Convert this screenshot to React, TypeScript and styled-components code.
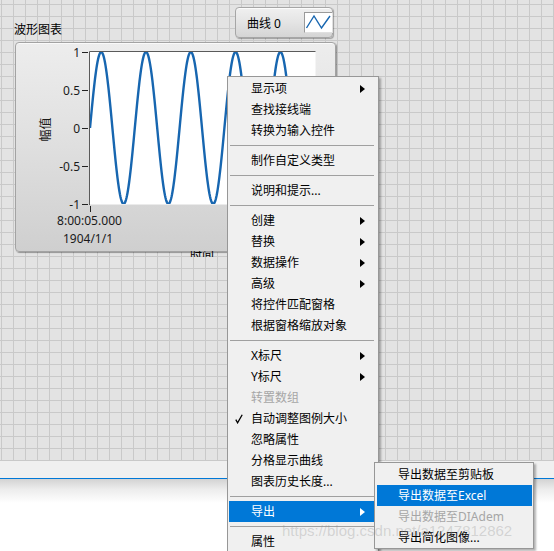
import React from "react";
import styled, { createGlobalStyle } from "styled-components";

const GlobalStyle = createGlobalStyle`
  html, body {
    margin: 0;
    padding: 0;
  }
  body {
    width: 554px;
    height: 551px;
    overflow: hidden;
    background: #ffffff;
    font-family: "Noto Sans", "Noto Sans CJK SC", sans-serif;
    font-size: 12px;
    color: #000;
  }
`;

const Screen = styled.div`
  position: relative;
  width: 554px;
  height: 551px;
  overflow: hidden;
  display: flex;
  flex-direction: column;
`;

/* LabVIEW front panel grid */
const Panel = styled.div`
  position: relative;
  flex: none;
  height: 461px;
  background-color: #e3e3e3;
  background-image: linear-gradient(to right, #c9c9c9 1px, transparent 1px),
    linear-gradient(to bottom, #c9c9c9 1px, transparent 1px);
  background-size: 12px 12px;
  background-position: 1px 4px;
`;

const StatusBar = styled.div`
  flex: none;
  height: 17px;
  background: #f0f0f0;
  border-bottom: 1px solid #0078d7;
`;

const BelowArea = styled.div`
  flex: 1;
  background: linear-gradient(to bottom, #d3d3d3 0px, #ececec 10px, #ffffff 24px);
`;

/* a control dropped on the panel: label above, frame below */
const ChartControl = styled.div`
  position: absolute;
  left: 14px;
  top: 22px;
  display: flex;
  flex-direction: column;
  align-items: flex-start;
`;

const ChartLabel = styled.div`
  line-height: 15px;
  font-size: 12px;
  margin-bottom: 5px;
`;

const ChartFrame = styled.div`
  margin-left: 1px;
  width: 321px;
  height: 210px;
  box-sizing: border-box;
  border: 1px solid #a3a3a3;
  border-radius: 4px;
  background: linear-gradient(to bottom, #ededed 0%, #e2e2e2 40%, #cfcfcf 100%);
  box-shadow: inset 0 1px 0 #fafafa, 1px 1px 1px rgba(0, 0, 0, 0.35);
  overflow: hidden;

  svg {
    display: block;
  }
`;

const AxisName = styled.div`
  margin-left: 176px;
  margin-top: -1px;
  height: 6px;
  overflow: hidden;
  font-size: 12px;
  line-height: 12px;

  span {
    display: block;
    margin-top: -1px;
  }
`;

const Legend = styled.div`
  position: absolute;
  left: 235px;
  top: 7px;
  width: 98px;
  height: 31px;
  box-sizing: border-box;
  display: flex;
  align-items: center;
  padding-left: 11px;
  gap: 23px;
  white-space: nowrap;
  border: 1px solid #a6a6a6;
  border-radius: 4px;
  background: linear-gradient(to bottom, #f0f0f0 0%, #e4e4e4 50%, #d5d5d5 100%);
  box-shadow: inset 0 1px 0 #fbfbfb, 1px 1px 1px rgba(0, 0, 0, 0.3);
  font-size: 12px;
`;

const Swatch = styled.div`
  flex: none;
  width: 29px;
  height: 21px;
  box-sizing: border-box;
  background: #ffffff;
  border: 1px solid #9a9a9a;
  border-right-color: #e0e0e0;
  border-bottom-color: #e0e0e0;

  svg {
    display: block;
  }
`;

const Menu = styled.div<{ $left: number; $top: number; $width: number }>`
  position: absolute;
  left: ${(p) => p.$left}px;
  top: ${(p) => p.$top}px;
  width: ${(p) => p.$width}px;
  box-sizing: border-box;
  background: #f0f0f0;
  border: 1px solid #979797;
  box-shadow: 2px 2px 2px rgba(0, 0, 0, 0.3);
  display: flex;
  flex-direction: column;
`;

const MainMenu = styled(Menu)`
  padding: 1px 3px 40px 1px;
`;

const SubMenu = styled(Menu)`
  padding: 1px 1px 0 2px;
`;

const Row = styled.div<{ $active?: boolean; $disabled?: boolean; $indent: number }>`
  position: relative;
  height: 21px;
  display: flex;
  align-items: center;
  padding-left: ${(p) => p.$indent}px;
  white-space: nowrap;
  font-size: 12px;
  line-height: 21px;
  color: ${(p) => (p.$active ? "#ffffff" : p.$disabled ? "#a6a6a6" : "#000000")};
  background: ${(p) => (p.$active ? "#0078d7" : "transparent")};
`;

const Arrow = styled.span<{ $active?: boolean }>`
  margin-left: auto;
  margin-right: 10px;
  width: 0;
  height: 0;
  border-top: 4px solid transparent;
  border-bottom: 4px solid transparent;
  border-left: 5px solid ${(p) => (p.$active ? "#ffffff" : "#000000")};
`;

const Check = styled.svg`
  position: absolute;
  left: 6px;
  top: 6px;
`;

const Separator = styled.div`
  height: 1px;
  margin: 4px 1px 4px 1px;
  background: #a0a0a0;
`;

const Watermark = styled.div`
  position: absolute;
  left: 282px;
  top: 523px;
  font-family: "Liberation Sans", Arial, sans-serif;
  font-size: 15px;
  line-height: 15px;
  color: rgba(140, 140, 140, 0.3);
  pointer-events: none;
  white-space: nowrap;
`;

type Entry =
  | { kind: "sep" }
  | {
      kind: "item";
      label: string;
      sub?: boolean;
      disabled?: boolean;
      checked?: boolean;
      active?: boolean;
    };

const mainEntries: Entry[] = [
  { kind: "item", label: "显示项", sub: true },
  { kind: "item", label: "查找接线端" },
  { kind: "item", label: "转换为输入控件" },
  { kind: "sep" },
  { kind: "item", label: "制作自定义类型" },
  { kind: "sep" },
  { kind: "item", label: "说明和提示..." },
  { kind: "sep" },
  { kind: "item", label: "创建", sub: true },
  { kind: "item", label: "替换", sub: true },
  { kind: "item", label: "数据操作", sub: true },
  { kind: "item", label: "高级", sub: true },
  { kind: "item", label: "将控件匹配窗格" },
  { kind: "item", label: "根据窗格缩放对象" },
  { kind: "sep" },
  { kind: "item", label: "X标尺", sub: true },
  { kind: "item", label: "Y标尺", sub: true },
  { kind: "item", label: "转置数组", disabled: true },
  { kind: "item", label: "自动调整图例大小", checked: true },
  { kind: "item", label: "忽略属性" },
  { kind: "item", label: "分格显示曲线" },
  { kind: "item", label: "图表历史长度..." },
  { kind: "sep" },
  { kind: "item", label: "导出", sub: true, active: true },
  { kind: "sep" },
  { kind: "item", label: "属性" },
];

const exportEntries: Entry[] = [
  { kind: "item", label: "导出数据至剪贴板" },
  { kind: "item", label: "导出数据至Excel", active: true },
  { kind: "item", label: "导出数据至DIAdem", disabled: true },
  { kind: "item", label: "导出简化图像..." },
];

const MenuEntries = ({ entries, indent }: { entries: Entry[]; indent: number }) => (
  <>
    {entries.map((e, i) =>
      e.kind === "sep" ? (
        <Separator key={i} />
      ) : (
        <Row key={i} $active={e.active} $disabled={e.disabled} $indent={indent}>
          {e.checked && (
            <Check width="8" height="10" viewBox="0 0 8 10">
              <path d="M0.8 5.6 L2.6 8.8 L7.2 0.8" fill="none" stroke="#000" strokeWidth="1.3" />
            </Check>
          )}
          {e.label}
          {e.sub && <Arrow $active={e.active} />}
        </Row>
      )
    )}
  </>
);

// sine curve in page coordinates
const plot = { left: 90, right: 315, top: 52, bottom: 204 };
const period = 44.8;
const wave = (() => {
  const pts: string[] = [];
  const mid = (plot.top + plot.bottom) / 2;
  const amp = (plot.bottom - plot.top) / 2;
  for (let x = plot.left; x <= plot.right; x += 0.5) {
    const y = mid - amp * Math.sin((2 * Math.PI * (x - plot.left)) / period);
    pts.push(`${x.toFixed(1)},${y.toFixed(2)}`);
  }
  return pts.join(" ");
})();

const yTicks = [
  { v: "1", y: 52 },
  { v: "0.5", y: 90 },
  { v: "0", y: 128 },
  { v: "-0.5", y: 166 },
  { v: "-1", y: 204 },
];

const WaveChart = () => (
  <svg width="319" height="208" viewBox="16 43 319 208">
    <defs>
      <clipPath id="plotClip">
        <rect x={plot.left} y={plot.top} width={plot.right - plot.left} height={plot.bottom - plot.top} />
      </clipPath>
    </defs>
    <rect
      x={plot.left - 0.5}
      y={plot.top - 0.5}
      width={plot.right - plot.left + 1}
      height={plot.bottom - plot.top + 1}
      fill="#ffffff"
    />
    <path d={`M${plot.left - 0.5} ${plot.bottom + 1} V${plot.top - 0.5} H${plot.right + 0.5}`} fill="none" stroke="#5a5a5a" strokeWidth="1" />
    <polyline points={wave} fill="none" stroke="#1766b0" strokeWidth="2.4" clipPath="url(#plotClip)" />
    {yTicks.map((t) => (
      <g key={t.v}>
        <line x1="82" x2="88" y1={t.y + 0.5} y2={t.y + 0.5} stroke="#222" strokeWidth="1" />
        <text
          x="80"
          y={t.y + 4.5}
          textAnchor="end"
          fontFamily="'Noto Sans', sans-serif"
          fontSize="12"
          fill="#1a1a1a"
        >
          {t.v}
        </text>
      </g>
    ))}
    <line x1="90.5" x2="90.5" y1="206" y2="212" stroke="#222" strokeWidth="1" />
    <text
      x="89.5"
      y="225"
      textAnchor="middle"
      fontFamily="'Noto Sans', sans-serif"
      fontSize="13"
      textLength="65"
      lengthAdjust="spacingAndGlyphs"
      fill="#1a1a1a"
    >
      8:00:05.000
    </text>
    <text
      x="88"
      y="243"
      textAnchor="middle"
      fontFamily="'Noto Sans', sans-serif"
      fontSize="13"
      textLength="50"
      lengthAdjust="spacingAndGlyphs"
      fill="#1a1a1a"
    >
      1904/1/1
    </text>
    <text
      x="46"
      y="133.5"
      textAnchor="middle"
      transform="rotate(-90 46 129.5)"
      fontFamily="'Noto Sans CJK SC', sans-serif"
      fontSize="12"
      fill="#1a1a1a"
    >
      幅值
    </text>
  </svg>
);

export default function App() {
  return (
    <>
      <GlobalStyle />
      <Screen>
        <Panel>
          <ChartControl>
            <ChartLabel>波形图表</ChartLabel>
            <ChartFrame>
              <WaveChart />
            </ChartFrame>
            <AxisName>
              <span>时间</span>
            </AxisName>
          </ChartControl>
          <Legend>
            <span>曲线 0</span>
            <Swatch>
              <svg width="27" height="19" viewBox="0 0 27 19">
                <polyline points="1.5,15 9,3 16.5,15 25,3" fill="none" stroke="#1766b0" strokeWidth="1.4" />
              </svg>
            </Swatch>
          </Legend>
        </Panel>
        <StatusBar />
        <BelowArea />

        <MainMenu $left={227} $top={76} $width={152}>
          <MenuEntries entries={mainEntries} indent={22} />
        </MainMenu>
        <SubMenu $left={374} $top={462} $width={160}>
          <MenuEntries entries={exportEntries} indent={21} />
        </SubMenu>
        <Watermark>https://blog.csdn.net/a1247812862</Watermark>
      </Screen>
    </>
  );
}
